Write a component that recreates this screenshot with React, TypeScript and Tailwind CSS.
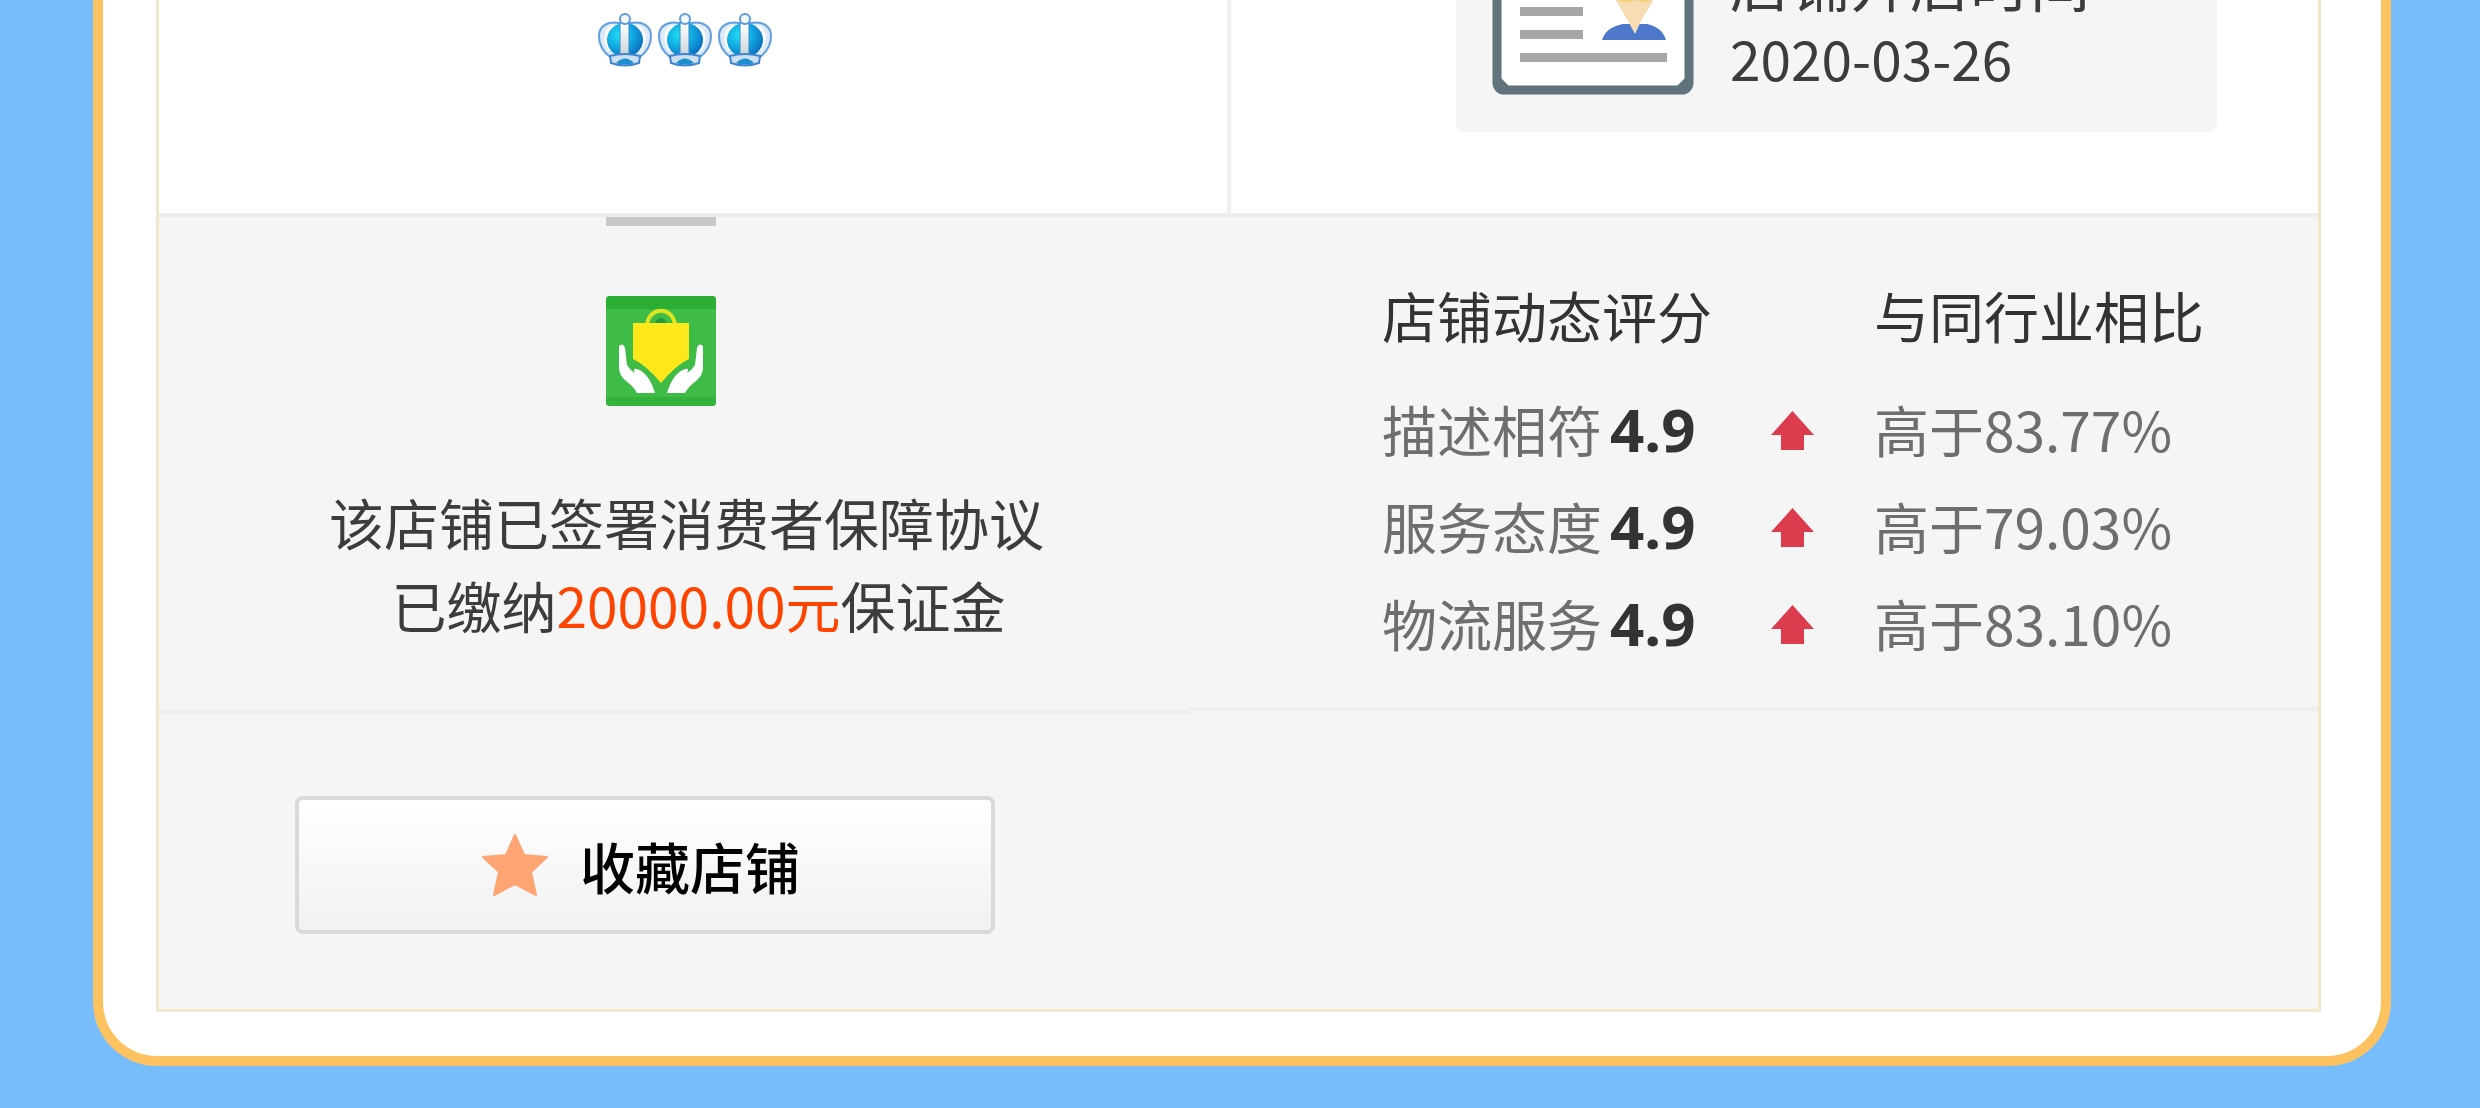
const ratings = [
  { label: "描述相符", score: "4.9", compare: "高于83.77%" },
  { label: "服务态度", score: "4.9", compare: "高于79.03%" },
  { label: "物流服务", score: "4.9", compare: "高于83.10%" },
];

function Crown() {
  return (
    <svg viewBox="0 0 54 54" className="h-[54px] w-[54px]" aria-hidden="true">
      <defs>
        <radialGradient id="crownBlue" cx="0.35" cy="0.35" r="0.75">
          <stop offset="0" stopColor="#1fe0f5" />
          <stop offset="0.5" stopColor="#10a9e0" />
          <stop offset="1" stopColor="#0b66bc" />
        </radialGradient>
        <linearGradient id="crownBand" x1="0" y1="0" x2="0" y2="1">
          <stop offset="0" stopColor="#ffffff" />
          <stop offset="1" stopColor="#c9d2d8" />
        </linearGradient>
      </defs>
      <path d="M12 44 C4 38 1 32 1 23 C1 12 11 8 21 10 L33 10 C43 8 53 12 53 23 C53 32 50 38 42 44 Z" fill="#dceafa" stroke="#5f9ce2" strokeWidth="2" />
      <path d="M12 37 C6 28 6 17 16 13 M42 37 C48 28 48 17 38 13" fill="none" stroke="#ffffff" strokeWidth="3" />
      <ellipse cx="27" cy="27" rx="18" ry="17" fill="url(#crownBlue)" />
      <rect x="22" y="10" width="9" height="34" fill="url(#crownBand)" stroke="#3d87c4" strokeWidth="1" />
      <circle cx="27" cy="6" r="5" fill="#f4faff" stroke="#5b9be0" strokeWidth="2" />
      <path d="M12 43 Q27 39 42 43 L41 50 Q27 55 13 50 Z" fill="#cfdeec" stroke="#3f85d0" strokeWidth="2" />
      <path d="M18 50 Q27 41 36 50 Q27 53 18 50 Z" fill="#1d8fd0" />
    </svg>
  );
}

function LicenseIcon() {
  return (
    <svg viewBox="0 0 202 156" className="h-[156px] w-[202px] shrink-0" aria-hidden="true">
      <rect x="5" y="5" width="192" height="146" rx="7" fill="#fff" stroke="#60727c" strokeWidth="9" />
      <path d="M8 138 L8 148 L18 148 Z M194 138 L194 148 L184 148 Z" fill="#60727c" />
      <g fill="#a6a6a6">
        <rect x="28" y="45" width="63" height="8" />
        <rect x="28" y="68" width="63" height="9" />
        <rect x="28" y="91" width="63" height="9" />
        <rect x="28" y="114" width="147" height="9" />
      </g>
      <path d="M110 101 Q114 88 131 85 L155 85 Q170 88 174 101 Z" fill="#4d78cc" />
      <path d="M124 40 H161 V62 L150 80 L143 95 L135 80 L124 62 Z" fill="#f8dcb4" />
      <path d="M124 40 H161 V60 Q152 66 143 61 Q133 66 124 60 Z" fill="#f2d27c" />
    </svg>
  );
}

function GuaranteeIcon() {
  return (
    <svg viewBox="0 0 110 110" className="h-[110px] w-[110px]" aria-hidden="true">
      <rect width="110" height="110" rx="4" fill="#3fbc48" />
      <path d="M4 0 H106 Q110 0 110 4 V13 H0 V4 Q0 0 4 0 Z" fill="#2bae32" />
      <path d="M0 101 H110 V106 Q110 110 106 110 H4 Q0 110 0 106 Z" fill="#33b33b" />
      <path d="M41 29 C43 10 67 10 69 29" fill="none" stroke="#dce51f" strokeWidth="4" />
      <path d="M49 27 Q55 17 61 27 Z" fill="#1f9a38" />
      <path d="M27 27 H83 V63 Q70 69 55 87 Q40 69 27 63 Z" fill="#fee81c" />
      <path id="hand" d="M13 50 Q17 46 19 52 L21 69 Q24 74 29 77 Q26 72 31 73 Q43 77 49 97 H31 Q27 90 20 85 Q13 79 13 72 Z" fill="#fff" />
      <use href="#hand" transform="matrix(-1 0 0 1 110 0)" />
    </svg>
  );
}

function UpArrow() {
  return (
    <svg viewBox="0 0 43 39" className="mt-1 block h-[39px] w-[43px]" aria-hidden="true">
      <path d="M21.5 0 L43 24 H33 V39 H10 V24 H0 Z" fill="#dc3c4e" />
    </svg>
  );
}

function Star() {
  return (
    <svg viewBox="0 0 66 62" className="h-[62px] w-[66px]" aria-hidden="true">
      <path d="M33 1 L42 21 L65 23 L49 38 L54 61 L33 50 L12 61 L17 38 L1 23 L24 21 Z" fill="#ffa573" stroke="#ffa573" strokeWidth="2" strokeLinejoin="round" />
    </svg>
  );
}

export default function App() {
  return (
    <main className="min-h-screen bg-[#78bdfb] pb-[42px] font-['Noto_Sans_CJK_SC',sans-serif] text-[55px] leading-[83px] text-[#3c3c3c]">
      <div className="ml-[93px] mr-[89px] rounded-b-[64px] border-x-10 border-b-10 border-[#fec360] bg-white pb-11 pl-[53px] pr-[60px]">
        <div className="border-x-3 border-b-3 border-[#f0e8cd] bg-[#f5f5f5]">
          <section className="grid h-[217px] grid-cols-[1072fr_1087fr] grid-rows-[213px] border-b-4 border-[#ededed] bg-white">
            <div className="flex justify-center gap-[6px] border-r-4 border-[#f0f0f0] pr-4 pt-[13px]">
              <Crown />
              <Crown />
              <Crown />
            </div>
            <div className="flex items-end pb-[81px] pl-[225px] pr-[101px]">
              <div className="flex grow items-end gap-9 rounded-lg bg-[#f5f5f5] pb-[37px] pl-9">
                <LicenseIcon />
                <div className="leading-[76px]">
                  <p className="text-[60px]">店铺开店时间</p>
                  <p>2020-03-26</p>
                </div>
              </div>
            </div>
          </section>

          <section className="grid grid-cols-[1031fr_1128fr] items-start">
            <div className="flex h-[497px] flex-col items-center border-b-4 border-[#eeeeee]">
              <div className="pr-7">
                <div className="h-[9px] w-[110px] bg-[#c8c8c8]" />
                <div className="pt-[70px]">
                  <GuaranteeIcon />
                </div>
              </div>
              <p className="whitespace-nowrap pl-6 pt-[74px]">该店铺已签署消费者保障协议</p>
              <p className="whitespace-nowrap pl-12">
                已缴纳<span className="text-[#ff4400]">20000.00元</span>保证金
              </p>
            </div>
            <div className="h-[494px] border-b-4 border-[#eeeeee] pl-48 pt-8">
              <table className="text-left text-[#6e6e6e]">
                <thead>
                  <tr className="h-[131px] text-[#333333]">
                    <th colSpan={2} className="font-normal">店铺动态评分</th>
                    <th className="whitespace-nowrap font-normal">与同行业相比</th>
                  </tr>
                </thead>
                <tbody>
                  {ratings.map((r) => (
                    <tr key={r.label} className="h-[97px]">
                      <td className="w-[389px] whitespace-nowrap">
                        {r.label}
                        <b className="pl-2 font-['Noto_Sans',sans-serif] text-[60px] font-bold text-[#333333]">{r.score}</b>
                      </td>
                      <td className="w-[103px]">
                        <UpArrow />
                      </td>
                      <td className="whitespace-nowrap">{r.compare}</td>
                    </tr>
                  ))}
                </tbody>
              </table>
            </div>
          </section>

          <section className="px-[136px] pb-[75px] pt-[82px]">
            <button
              type="button"
              className="flex h-[138px] w-[700px] items-center justify-center gap-8 rounded-lg border-4 border-[#d9d9d9] bg-linear-to-b from-white to-[#f1f1f1] pr-2 font-medium text-black"
            >
              <Star />
              收藏店铺
            </button>
          </section>
        </div>
      </div>
    </main>
  );
}
